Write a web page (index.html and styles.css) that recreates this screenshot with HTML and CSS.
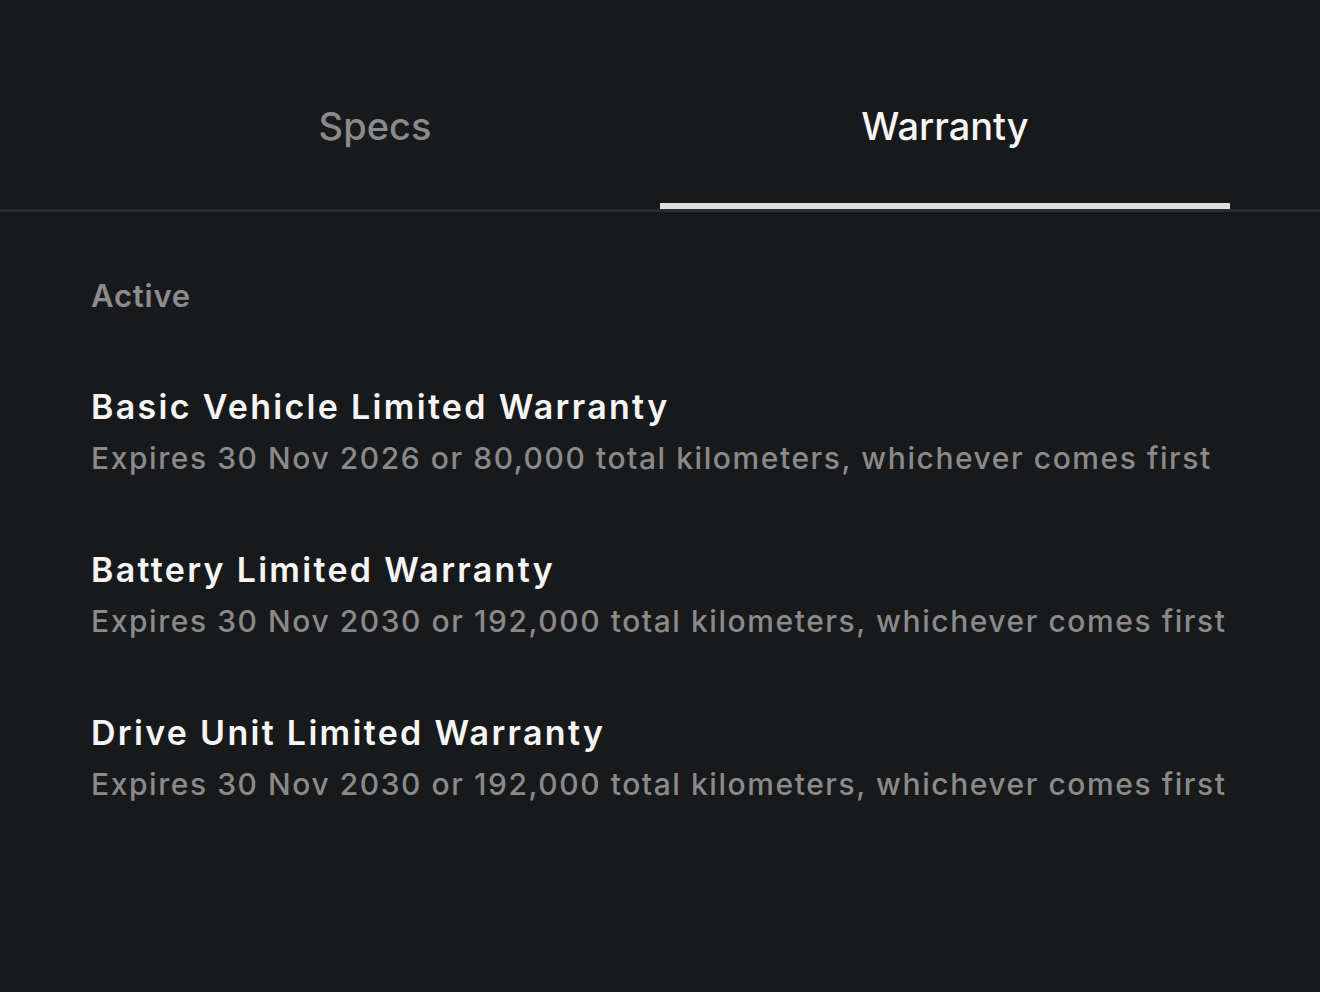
FILE: index.html
```html
<!DOCTYPE html>
<html lang="en">
  <head>
    <meta charset="UTF-8" />
    <meta name="viewport" content="width=device-width, initial-scale=1.0" />
    <title>Warranty</title>
    <link rel="stylesheet" href="styles.css">
  </head>
  <body>
    <div class="tabs">
      <div class="tab">Specs</div>
      <div class="tab tab-active">Warranty</div>
    </div>
    <div class="content">
      <div class="section-label">Active</div>
      <div class="list">
        <div class="item">
          <div class="item-title">Basic Vehicle Limited Warranty</div>
          <div class="item-sub">Expires 30 Nov 2026 or 80,000 total kilometers, whichever comes first</div>
        </div>
        <div class="item">
          <div class="item-title">Battery Limited Warranty</div>
          <div class="item-sub">Expires 30 Nov 2030 or 192,000 total kilometers, whichever comes first</div>
        </div>
        <div class="item">
          <div class="item-title">Drive Unit Limited Warranty</div>
          <div class="item-sub">Expires 30 Nov 2030 or 192,000 total kilometers, whichever comes first</div>
        </div>
      </div>
    </div>
  </body>
</html>
```

FILE: styles.css
```css
html, body {
  margin: 0;
  height: 100%;
}
body {
  background: #18191b;
  font-family: Inter, "Noto Sans", sans-serif;
  font-weight: 500;
  color: #f4f4f4;
}
.tabs {
  display: flex;
  padding: 0 90px;
  border-bottom: 3px solid #2b2c2e;
}
.tab {
  flex: 1;
  height: 209px;
  box-sizing: border-box;
  padding-top: 48px;
  display: flex;
  align-items: center;
  justify-content: center;
  font-size: 38px;
  color: #8a8a8a;
  border-bottom: 6px solid transparent;
}
.tab-active {
  color: #f6f6f6;
  border-bottom-color: #dedede;
}
.content {
  padding: 64px 91px 0;
}
.section-label {
  font-size: 31px;
  font-weight: 600;
  letter-spacing: 0.8px;
  line-height: 40px;
  color: #8c8c8c;
  margin-bottom: 69px;
}
.list {
  display: flex;
  flex-direction: column;
  gap: 61px;
}
.item-title {
  font-size: 34px;
  font-weight: 600;
  letter-spacing: 2.3px;
  line-height: 44px;
  color: #f5f5f5;
}
.item-sub {
  font-size: 30px;
  letter-spacing: 1.56px;
  line-height: 58px;
  color: #8a8a8a;
}
```
